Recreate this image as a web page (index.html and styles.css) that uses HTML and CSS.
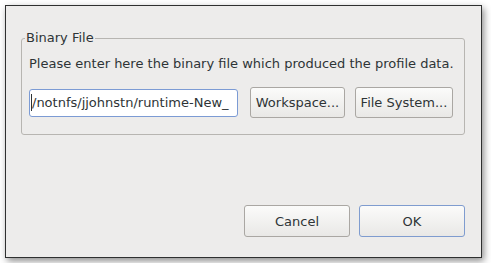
FILE: index.html
```html
<!DOCTYPE html>
<html lang="en">
  <head>
    <meta charset="UTF-8" />
    <title>Binary File</title>
    <link rel="stylesheet" href="styles.css">
  </head>
  <body>
    <div class="dialog">
      <fieldset class="group">
        <legend>Binary File</legend>
        <p class="hint">Please enter here the binary file which produced the profile data.</p>
        <div class="file-row">
          <div class="field"><span class="caret"></span>/notnfs/jjohnstn/runtime-New_</div>
          <button class="btn workspace">Workspace...</button>
          <button class="btn filesystem">File System...</button>
        </div>
      </fieldset>

      <div class="actions">
        <button class="btn action">Cancel</button>
        <button class="btn action default">OK</button>
      </div>
    </div>
  </body>
</html>
```

FILE: styles.css
```css
body {
  margin: 0;
  padding: 5px;
  background-color: white;
  font-family: "DejaVu Sans", sans-serif;
  font-size: 13px;
  color: #2e3436;
}

.dialog {
  width: 475px;
  height: 251px;
  box-sizing: content-box;
  border: 1px solid #2f3030;
  background-color: #edeceb;
  box-shadow: 2px 3px 7px rgba(0, 0, 0, 0.45);
  display: flex;
  flex-direction: column;
  padding: 0;
}

.group {
  margin: 24px 16px 0 15px;
  padding: 10px 11px 16px 7px;
  border: 1px solid #b7b5b1;
  border-radius: 3px;
  min-width: 0;
}

.group legend {
  margin-left: -4px;
  padding: 0 1px;
  line-height: 16px;
}

.hint {
  margin: 0;
  line-height: 16px;
  white-space: nowrap;
}

.file-row {
  display: flex;
  align-items: center;
  margin-top: 15px;
}

.field {
  width: 206px;
  height: 26px;
  line-height: 26px;
  padding: 0 0 0 1px;
  border: 1px solid #7c9bd4;
  border-radius: 3px;
  background-color: white;
  white-space: nowrap;
  overflow: hidden;
  display: flex;
  align-items: center;
}

.caret {
  display: inline-block;
  width: 1px;
  height: 17px;
  background-color: #2e3436;
  flex: none;
}

.btn {
  font-family: "DejaVu Sans", sans-serif;
  font-size: 13px;
  color: #2e3436;
  background: linear-gradient(#fbfbfa, #e9e8e6);
  border: 1px solid #aaa7a3;
  border-radius: 3px;
  padding: 0;
  height: 31px;
}

.workspace {
  margin-left: 12px;
  width: 95px;
}

.filesystem {
  margin-left: 10px;
  width: 98px;
}

.actions {
  margin-top: auto;
  display: flex;
  justify-content: flex-end;
  gap: 9px;
  padding: 0 16px 20px 0;
}

.action {
  width: 106px;
  height: 32px;
}

.default {
  border-color: #7f9ccf;
}
```
